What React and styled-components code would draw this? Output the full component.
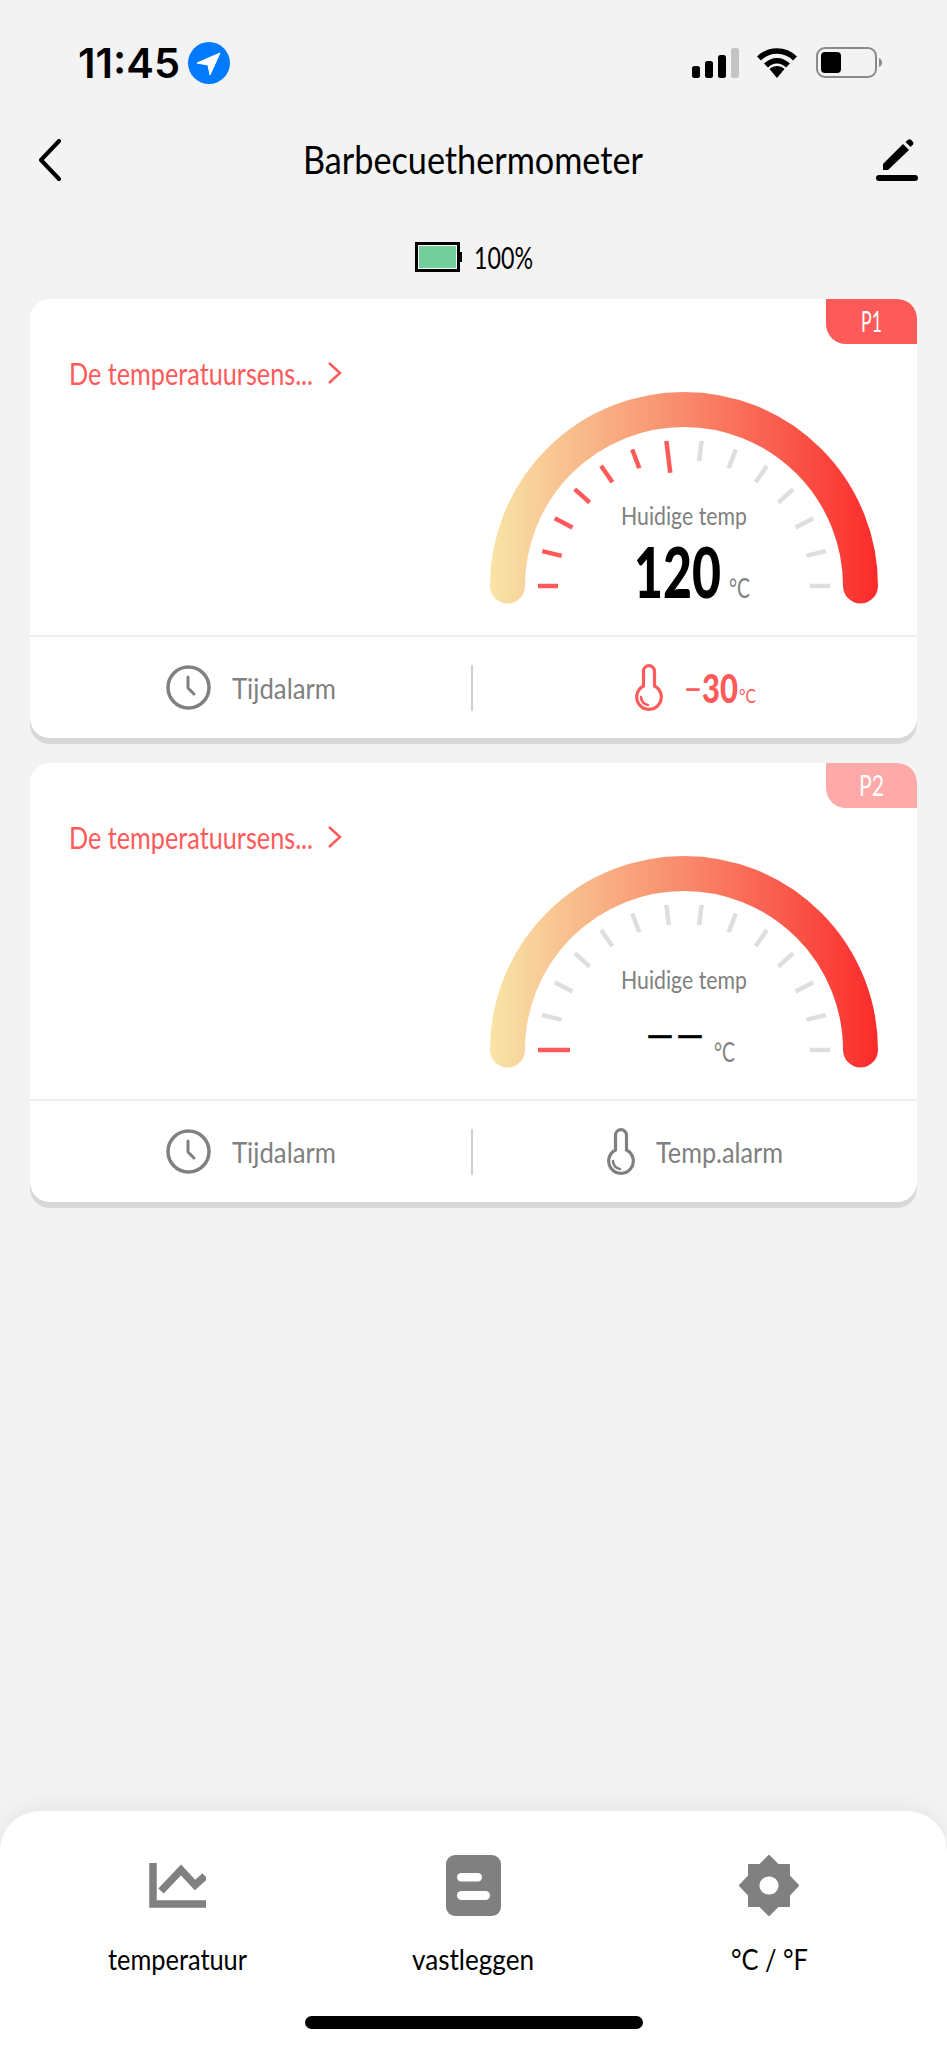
import React, { useLayoutEffect, useRef } from "react";
import styled, { createGlobalStyle } from "styled-components";

const GRAY = "#808080";
const RED = "#ff5a5a";

const GlobalStyle = createGlobalStyle`
  html, body {
    margin: 0;
    padding: 0;
    background: #f3f3f3;
  }
  * {
    box-sizing: border-box;
  }
`;

const Page = styled.div`
  width: 947px;
  height: 2048px;
  display: flex;
  flex-direction: column;
  overflow: hidden;
  font-family: Lato, "Noto Sans", sans-serif;
`;

// the app uses a condensed font we don't have, so text gets squeezed to its width
const Fit = styled.span`
  display: inline-block;
  flex: none;
  width: ${(p) => p.$w}px;
  white-space: nowrap;
  transform-origin: left center;
`;

function FitText({ w, children }) {
  const ref = useRef(null);
  useLayoutEffect(() => {
    const el = ref.current;
    el.style.transform = "none";
    const range = document.createRange();
    range.selectNodeContents(el);
    el.style.transform = `scaleX(${w / range.getBoundingClientRect().width})`;
  }, [w]);
  return (
    <Fit ref={ref} $w={w}>
      {children}
    </Fit>
  );
}

/* status bar */
const StatusBar = styled.div`
  height: 126px;
  padding: 42px 65px 0 78px;
  display: flex;
  justify-content: space-between;
  align-items: flex-start;
`;
const TimeGroup = styled.div`
  display: flex;
  align-items: center;
  gap: 8px;
`;
const Time = styled.span`
  font-family: Inter, "Liberation Sans", sans-serif;
  font-size: 41px;
  line-height: 42px;
  font-weight: 600;
  color: #000;
`;
const StatusIcons = styled.div`
  display: flex;
  gap: 17px;
  padding-top: 5px;
`;

/* nav */
const NavBar = styled.div`
  height: 68px;
  padding: 0 29px 0 38px;
  display: flex;
  align-items: center;
  justify-content: space-between;
`;
const Title = styled.h1`
  margin: 0 0 2px 7px;
  font-size: 38px;
  line-height: 46px;
  font-weight: 400;
  color: #000;
`;

const BatteryRow = styled.div`
  margin-top: 48px;
  height: 30px;
  display: flex;
  justify-content: center;
  align-items: center;
  gap: 12px;
`;
const BatteryText = styled.span`
  font-size: 30px;
  line-height: 30px;
  color: #000;
`;

/* cards */
const CardList = styled.div`
  margin-top: 27px;
  padding: 0 30px;
  display: flex;
  flex-direction: column;
  gap: 25px;
`;
const Card = styled.section`
  position: relative;
  height: 439px;
  background: #fff;
  border-radius: 20px;
  box-shadow: 0 6px 0 #d8d8d8;
`;
const Tag = styled.div`
  position: absolute;
  top: 0;
  right: 0;
  width: 91px;
  height: 45px;
  padding-bottom: 2px;
  display: flex;
  align-items: center;
  justify-content: center;
  background: ${(p) => (p.$active ? RED : "#ffa9a9")};
  border-radius: 0 20px 0 20px;
  color: #fff;
  font-size: 29px;
`;
const CardBody = styled.div`
  height: 338px;
  padding: 0 39px;
  display: flex;
  justify-content: space-between;
  align-items: flex-start;
  border-bottom: 2px solid #eeeeee;
`;
const ProbeLink = styled.div`
  margin-top: 54px;
  display: flex;
  align-items: center;
  gap: 14px;
  color: ${RED};
  font-size: 30px;
  line-height: 40px;
`;
const GaugeWrap = styled.div`
  position: relative;
  margin-top: 93px;
  width: 388px;
  height: 212px;
`;
const GaugeLabel = styled.div`
  position: absolute;
  top: 106px;
  left: 0;
  right: 0;
  display: flex;
  justify-content: center;
  color: ${GRAY};
  font-size: 25px;
  line-height: 34px;
`;
const GaugeValue = styled.div`
  position: absolute;
  left: 15px;
  right: 0;
  top: 144px;
  height: 69px;
  display: flex;
  justify-content: center;
  align-items: flex-end;
  gap: ${(p) => (p.$empty ? "5px" : "8px")};
`;
const Reading = styled.span`
  font-size: 70px;
  line-height: 68px;
  font-weight: 900;
  color: #000;
`;
const Dashes = styled.span`
  font-family: "Liberation Sans", sans-serif;
  font-size: 23px;
  line-height: 34px;
  font-weight: 700;
  letter-spacing: 7px;
  color: #000;
  margin-bottom: 17px;
  -webkit-text-stroke: 0.6px #000;
`;
const Unit = styled.span`
  color: ${GRAY};
  font-size: 27px;
  line-height: 30px;
  margin-bottom: 2px;
`;

const CardFooter = styled.div`
  height: 101px;
  display: grid;
  grid-template-columns: 441px 2px 1fr;
  align-items: center;
`;
const FooterItem = styled.div`
  display: flex;
  justify-content: center;
  align-items: center;
  gap: 21px;
  color: ${(p) => p.$color || GRAY};
  font-size: 29px;
`;
const FooterDivider = styled.div`
  width: 2px;
  height: 46px;
  background: #cfcfcf;
`;
const AlarmText = styled.div`
  display: flex;
  align-items: baseline;
  gap: 1px;
`;
const AlarmValue = styled.span`
  font-size: 40px;
  line-height: 44px;
  font-weight: 900;
`;
const AlarmSign = styled.span`
  font-weight: 400;
`;
const AlarmUnit = styled.span`
  font-size: 20px;
`;

/* bottom sheet */
const Sheet = styled.nav`
  margin-top: auto;
  height: 237px;
  background: #fff;
  border-radius: 40px 40px 0 0;
  box-shadow: 0 -6px 22px rgba(0, 0, 0, 0.05);
  padding: 44px 30px 0;
  display: flex;
  flex-direction: column;
`;
const Tabs = styled.div`
  display: grid;
  grid-template-columns: repeat(3, 1fr);
`;
const Tab = styled.div`
  display: flex;
  flex-direction: column;
  align-items: center;
`;
const TabIcon = styled.div`
  height: 61px;
  display: flex;
  align-items: center;
  justify-content: center;
`;
const TabLabel = styled.span`
  margin-top: 28px;
  font-size: 29px;
  line-height: 30px;
  color: #000;
`;
const HomeIndicator = styled.div`
  align-self: center;
  margin-top: 42px;
  width: 338px;
  height: 13px;
  border-radius: 7px;
  background: #000;
`;

function LocationBadge() {
  return (
    <svg width="42" height="42" viewBox="0 0 42 42">
      <circle cx="21" cy="21" r="21" fill="#007aff" />
      <path d="M32 11 22 33 20 23 9 21Z" fill="#fff" stroke="#fff" strokeWidth="1" strokeLinejoin="round" />
    </svg>
  );
}

function SignalIcon() {
  const bars = [
    { x: 0, h: 12 },
    { x: 13, h: 17 },
    { x: 26, h: 23 },
    { x: 39, h: 30, fill: "#c4c4c4" },
  ];
  return (
    <svg width="47" height="31" viewBox="0 0 47 31">
      {bars.map((b) => (
        <rect key={b.x} x={b.x} y={31 - b.h} width="8" height={b.h} rx="2.5" fill={b.fill || "#000"} />
      ))}
    </svg>
  );
}

function WifiIcon() {
  return (
    <svg width="42" height="31" viewBox="0 0 42 31" fill="none" stroke="#000" strokeWidth="5.5">
      <path d="M3 11.5C13 1.5 29 1.5 39 11.5" />
      <path d="M10 18.5C16.5 12 25.5 12 32 18.5" />
      <path d="M13.5 22 21 31 28.5 22C24 18 18 18 13.5 22Z" fill="#000" stroke="none" />
    </svg>
  );
}

function PhoneBattery() {
  return (
    <svg width="67" height="31" viewBox="0 0 67 31">
      <rect x="2" y="1" width="59" height="29" rx="8" fill="none" stroke="#8a8a8a" strokeWidth="2" />
      <rect x="6" y="5" width="20" height="21" rx="4" fill="#000" />
      <path d="M64 11c2 1 3 2.500 3 4.500s-1 3.500-3 4.500z" fill="#8a8a8a" />
    </svg>
  );
}

function BackIcon() {
  return (
    <svg width="24" height="42" viewBox="0 0 24 42" fill="none" stroke="#000" strokeWidth="4" strokeLinecap="round" strokeLinejoin="round">
      <path d="M21 2 3 21 21 40" />
    </svg>
  );
}

function PenIcon() {
  return (
    <svg width="42" height="42" viewBox="0 0 42 42">
      <path d="M7 25 27 5 33 11 12 31H7Z" fill="#000" />
      <path d="M29.500 3 32 .7Q33.500-.3 35 .7L37 3Q37.800 4.500 37 5.500L34.500 8Z" fill="#000" />
      <rect x="0" y="36" width="42" height="6" rx="3" fill="#000" />
    </svg>
  );
}

function SmallBattery() {
  return (
    <svg width="47" height="30" viewBox="0 0 47 30">
      <rect x="1.500" y="1.500" width="42" height="27" fill="#fff" stroke="#000" strokeWidth="3" />
      <rect x="4" y="4" width="37" height="22" fill="#72ce9b" />
      <rect x="44" y="10" width="3" height="10" fill="#000" />
    </svg>
  );
}

function Gauge({ id, activeTick }) {
  const cx = 194;
  const cy = 194;
  const ticks = Array.from({ length: 14 }, (_, i) => {
    const a = (Math.PI * i) / 13;
    const inner = i === activeTick ? 114 : 126;
    return {
      i,
      x1: cx - 146 * Math.cos(a),
      y1: cy - 146 * Math.sin(a),
      x2: cx - inner * Math.cos(a),
      y2: cy - inner * Math.sin(a),
    };
  });
  return (
    <svg width="388" height="212" viewBox="0 0 388 212">
      <defs>
        <linearGradient id={id} gradientUnits="userSpaceOnUse" x1="0" y1="0" x2="388" y2="0">
          <stop offset="0" stopColor="#f8e4a6" />
          <stop offset="0.5" stopColor="#f98a6c" />
          <stop offset="1" stopColor="#fb2b2b" />
        </linearGradient>
      </defs>
      <path
        d="M17.500 194A176.500 176.500 0 0 1 370.500 194"
        fill="none"
        stroke={`url(#${id})`}
        strokeWidth="35"
        strokeLinecap="round"
      />
      {ticks.map((t) => (
        <line
          key={t.i}
          x1={t.x1}
          y1={t.y1}
          x2={t.x2}
          y2={t.y2}
          stroke={t.i <= activeTick ? RED : "#dedede"}
          strokeWidth="4.500"
        />
      ))}
    </svg>
  );
}

function ClockIcon() {
  return (
    <svg width="45" height="45" viewBox="0 0 45 45" fill="none" stroke={GRAY} strokeWidth="3.500">
      <circle cx="22.500" cy="22.500" r="20.500" />
      <path d="M22 12V23L28 29" strokeWidth="3" strokeLinecap="round" strokeLinejoin="round" />
    </svg>
  );
}

function ThermoIcon({ color }) {
  return (
    <svg width="28" height="47" viewBox="0 0 28 47" fill="none" stroke={color} strokeWidth="3.200">
      <path d="M8.500 22V7.200a5.500 5.500 0 0 1 11 0V22a12.300 12.300 0 1 1-11 0Z" />
      <path d="M6 33a8 8 0 0 0 7 8" strokeWidth="2.600" strokeLinecap="round" />
    </svg>
  );
}

function ChartIcon() {
  return (
    <svg width="57" height="45" viewBox="0 0 57 45" fill="none" stroke={GRAY} strokeWidth="7.500">
      <path d="M4 0V41H57" />
      <path d="M12 28 32 7 46 22 56 13" />
    </svg>
  );
}

function RecordIcon() {
  return (
    <svg width="55" height="61" viewBox="0 0 55 61">
      <rect width="55" height="61" rx="9" fill={GRAY} />
      <rect x="11" y="18" width="25" height="8.500" rx="4.200" fill="#fff" />
      <rect x="11" y="36" width="33" height="9" rx="4.500" fill="#fff" />
    </svg>
  );
}

function GearIcon() {
  return (
    <svg width="60" height="61" viewBox="0 0 60 61">
      <path
        fillRule="evenodd"
        fill={GRAY}
        stroke={GRAY}
        strokeWidth="2"
        strokeLinejoin="round"
        d="M30 1 39 10H50V21L59 30.500 50 40V51H39L30 60 21 51H10V40L1 30.500 10 21V10H21ZM30 20.500a10.500 10 0 1 0 .01 0Z"
      />
    </svg>
  );
}

function ProbeCard({ id, name, nameWidth, active, activeTick, reading, alarm }) {
  return (
    <Card>
      <Tag $active={active}>
        <FitText w={nameWidth}>{name}</FitText>
      </Tag>
      <CardBody>
        <ProbeLink>
          <FitText w={244}>De temperatuursens...</FitText>
          <svg width="15" height="24" viewBox="0 0 15 24" fill="none" stroke={RED} strokeWidth="2.500">
            <path d="M2 2 13 12 2 22" />
          </svg>
        </ProbeLink>
        <GaugeWrap>
          <Gauge id={id} activeTick={activeTick} />
          <GaugeLabel>
            <FitText w={126}>Huidige temp</FitText>
          </GaugeLabel>
          <GaugeValue $empty={!reading}>
            {reading ? (
              <Reading>
                <FitText w={87}>{reading}</FitText>
              </Reading>
            ) : (
              <Dashes>——</Dashes>
            )}
            <Unit>
              <FitText w={21}>°C</FitText>
            </Unit>
          </GaugeValue>
        </GaugeWrap>
      </CardBody>
      <CardFooter>
        <FooterItem>
          <ClockIcon />
          <FitText w={104}>Tijdalarm</FitText>
        </FooterItem>
        <FooterDivider />
        {alarm ? (
          <FooterItem $color={RED}>
            <ThermoIcon color={RED} />
            <AlarmText>
              <AlarmValue>
                <FitText w={54}>
                  <AlarmSign>−</AlarmSign>
                  {alarm}
                </FitText>
              </AlarmValue>
              <AlarmUnit>
                <FitText w={17}>°C</FitText>
              </AlarmUnit>
            </AlarmText>
          </FooterItem>
        ) : (
          <FooterItem>
            <ThermoIcon color={GRAY} />
            <FitText w={127}>Temp.alarm</FitText>
          </FooterItem>
        )}
      </CardFooter>
    </Card>
  );
}

export default function App() {
  return (
    <Page>
      <GlobalStyle />
      <StatusBar>
        <TimeGroup>
          <Time>
            <FitText w={102}>11:45</FitText>
          </Time>
          <LocationBadge />
        </TimeGroup>
        <StatusIcons>
          <SignalIcon />
          <WifiIcon />
          <PhoneBattery />
        </StatusIcons>
      </StatusBar>
      <NavBar>
        <BackIcon />
        <Title>
          <FitText w={340}>Barbecuethermometer</FitText>
        </Title>
        <PenIcon />
      </NavBar>
      <BatteryRow>
        <SmallBattery />
        <BatteryText>
          <FitText w={59}>100%</FitText>
        </BatteryText>
      </BatteryRow>
      <CardList>
        <ProbeCard id="gauge-p1" name="P1" nameWidth={21} active activeTick={6} reading="120" alarm="30" />
        <ProbeCard id="gauge-p2" name="P2" nameWidth={25} activeTick={0} />
      </CardList>
      <Sheet>
        <Tabs>
          <Tab>
            <TabIcon>
              <ChartIcon />
            </TabIcon>
            <TabLabel>
              <FitText w={139}>temperatuur</FitText>
            </TabLabel>
          </Tab>
          <Tab>
            <TabIcon>
              <RecordIcon />
            </TabIcon>
            <TabLabel>
              <FitText w={122}>vastleggen</FitText>
            </TabLabel>
          </Tab>
          <Tab>
            <TabIcon>
              <GearIcon />
            </TabIcon>
            <TabLabel>
              <FitText w={77}>°C / °F</FitText>
            </TabLabel>
          </Tab>
        </Tabs>
        <HomeIndicator />
      </Sheet>
    </Page>
  );
}
